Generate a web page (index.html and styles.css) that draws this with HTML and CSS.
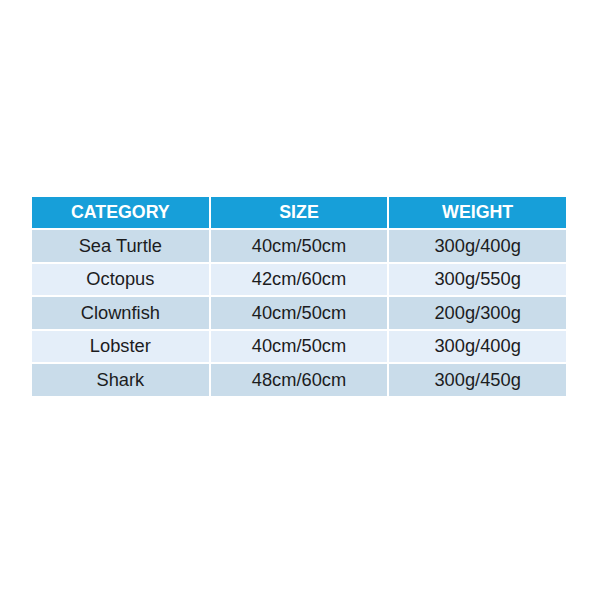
FILE: index.html
```html
<!DOCTYPE html>
<html>
<head>
<meta charset="utf-8">
<link rel="stylesheet" href="styles.css">
</head>
<body>
<div class="page">
  <div class="table">
    <div class="cell head">CATEGORY</div>
    <div class="cell head">SIZE</div>
    <div class="cell head">WEIGHT</div>

    <div class="cell odd">Sea Turtle</div>
    <div class="cell odd">40cm/50cm</div>
    <div class="cell odd">300g/400g</div>

    <div class="cell even">Octopus</div>
    <div class="cell even">42cm/60cm</div>
    <div class="cell even">300g/550g</div>

    <div class="cell odd">Clownfish</div>
    <div class="cell odd">40cm/50cm</div>
    <div class="cell odd">200g/300g</div>

    <div class="cell even">Lobster</div>
    <div class="cell even">40cm/50cm</div>
    <div class="cell even">300g/400g</div>

    <div class="cell odd">Shark</div>
    <div class="cell odd">48cm/60cm</div>
    <div class="cell odd">300g/450g</div>
  </div>
</div>
</body>
</html>
```

FILE: styles.css
```css
html, body {
  margin: 0;
  padding: 0;
  background: #ffffff;
}
.page {
  width: 600px;
  height: 600px;
  padding: 197px 0 0 32px;
  box-sizing: border-box;
  font-family: "Liberation Sans", Arial, sans-serif;
}
.table {
  width: 534px;
  display: grid;
  grid-template-columns: repeat(3, 1fr);
  grid-template-rows: 31px repeat(5, 31.5px);
  column-gap: 2px;
  row-gap: 2px;
}
.cell {
  display: flex;
  align-items: center;
  justify-content: center;
  font-size: 18.3px;
  color: #1c1c1e;
}
.head {
  background: #179fd9;
  color: #ffffff;
  font-weight: bold;
  font-size: 17.8px;
  padding-bottom: 1px;
}
.odd {
  background: #c9dcea;
}
.even {
  background: #e4eef9;
}
```
